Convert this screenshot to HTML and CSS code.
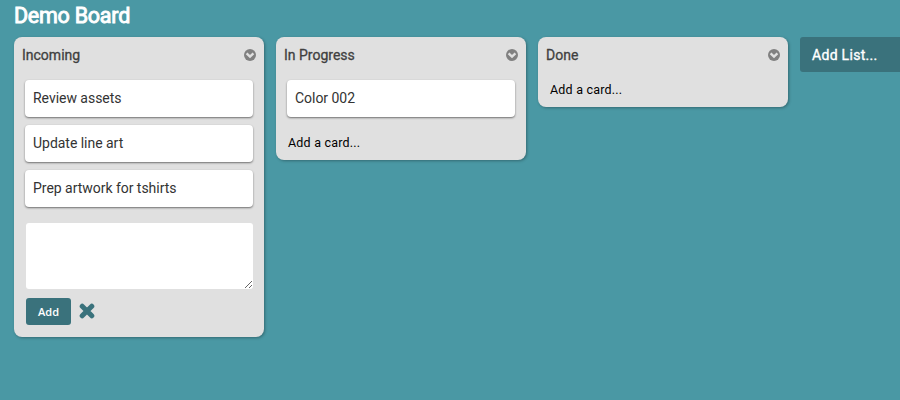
FILE: index.html
```html
<!DOCTYPE html>
<html lang="en">
<head>
<meta charset="utf-8">
<title>Demo Board</title>
<link rel="stylesheet" href="styles.css">
</head>
<body>
<svg width="0" height="0" class="defs">
  <symbol id="chevron" viewBox="0 0 12 12"><circle cx="6" cy="6" r="6" fill="#808080"/><path d="M2.6 4.4 6 7.6l3.4-3.2" fill="none" stroke="#e0e0e0" stroke-width="2.4"/></symbol>
</svg>
<h1 class="board-title"><span>Demo Board</span></h1>
<main class="board">
  <section class="list">
    <header class="list-header"><h2><span>Incoming</span></h2><svg class="menu"><use href="#chevron"/></svg></header>
    <div class="cards">
      <article class="card"><span>Review assets</span></article>
      <article class="card"><span>Update line art</span></article>
      <article class="card"><span>Prep artwork for tshirts</span></article>
    </div>
    <form class="composer">
      <textarea aria-label="Card text"></textarea>
      <div class="actions">
        <button type="button" class="add">Add</button>
        <svg class="close" viewBox="0 0 16 16"><path d="M3.2 3.2 12.8 12.8M12.8 3.2 3.2 12.8"/></svg>
      </div>
    </form>
  </section>
  <section class="list">
    <header class="list-header"><h2><span>In Progress</span></h2><svg class="menu"><use href="#chevron"/></svg></header>
    <div class="cards">
      <article class="card"><span>Color 002</span></article>
    </div>
    <a class="add-card after-cards"><span>Add a card...</span></a>
  </section>
  <section class="list">
    <header class="list-header"><h2><span>Done</span></h2><svg class="menu"><use href="#chevron"/></svg></header>
    <a class="add-card"><span>Add a card...</span></a>
  </section>
  <a class="add-list"><span>Add List...</span></a>
</main>
</body>
</html>
```
FILE: styles.css
```css
* { box-sizing: border-box; }
body {
  margin: 0;
  height: 400px;
  overflow: hidden;
  background: #4a98a4;
  color: #333;
  font-family: Roboto, sans-serif;
}
.defs { display: none; }
.board-title {
  margin: 0;
  height: 37px;
  padding: 3px 0 0 14px;
  color: #fff;
  font-size: 21.5px;
  line-height: 26px;
  font-weight: 400;
  letter-spacing: -0.25px;
  -webkit-text-stroke: 0.9px #fff;
}
.board {
  display: flex;
  align-items: flex-start;
  gap: 12px;
  padding-left: 14px;
}
.list {
  flex: 0 0 250px;
  background: #e0e0e0;
  border-radius: 8px;
  box-shadow: 1px 1px 3px rgba(0, 0, 0, 0.3);
}
.list-header {
  display: flex;
  align-items: center;
  justify-content: space-between;
  height: 36px;
  padding: 0 8px;
}
.list-header h2 {
  margin: 0;
  color: #404040;
  font-size: 14px;
  line-height: 20px;
  font-weight: 400;
  -webkit-text-stroke: 0.3px #404040;
}
.menu { width: 12px; height: 12px; }
.cards {
  display: flex;
  flex-direction: column;
  gap: 8px;
  padding: 7px 11px 0;
}
.card {
  height: 37px;
  padding: 0 8px;
  background: #fff;
  border-radius: 4px;
  box-shadow: 0 1px 2px rgba(0, 0, 0, 0.5);
  font-size: 14px;
  line-height: 37px;
  letter-spacing: -0.03px;
}
.composer { padding: 16px 11px 12px 12px; }
textarea {
  display: block;
  width: 100%;
  height: 66px;
  margin: 0;
  border: 0;
  border-radius: 3px;
  background: #fff;
  resize: vertical;
}
.actions {
  display: flex;
  align-items: center;
  gap: 8px;
  margin-top: 9px;
}
.add {
  width: 45px;
  height: 27px;
  padding: 1px 0 0;
  border: 0;
  border-radius: 3px;
  background: #3a727c;
  color: #fff;
  font: 600 11px/26px "Open Sans", sans-serif;
}
.close {
  width: 16px;
  height: 16px;
  margin-bottom: 2px;
}
.close path {
  fill: none;
  stroke: #3a727c;
  stroke-width: 5;
  stroke-linecap: round;
}
.add-card {
  display: block;
  height: 34px;
  padding-left: 12px;
  color: #000;
  font-size: 12.5px;
  line-height: 34px;
  letter-spacing: 0.2px;
}
.after-cards { margin-top: 9px; }
.add-list {
  flex: 1;
  height: 35px;
  padding-left: 12px;
  border-radius: 3px 0 0 3px;
  background: #3a727c;
  color: #fff;
  font-size: 14px;
  line-height: 36px;
  letter-spacing: 0.3px;
  -webkit-text-stroke: 0.35px #fff;
}
```
